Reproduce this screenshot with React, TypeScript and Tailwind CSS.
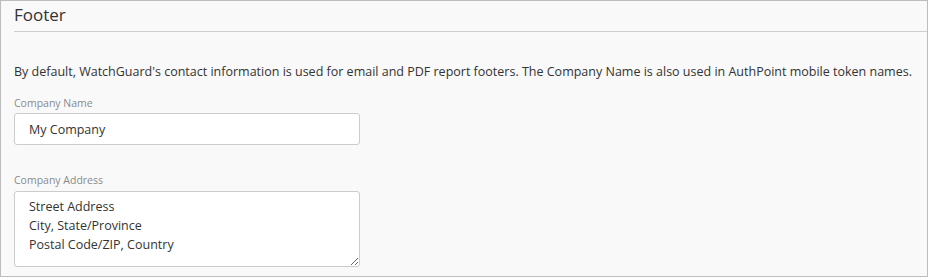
export default function App() {
  return (
    <div
      className="w-[928px] h-[277px] border border-[#bdbdbd] bg-[#f9f9f9] text-[#333] overflow-hidden"
      style={{ fontFamily: '"Open Sans", "Noto Sans", sans-serif' }}
    >
      {/* Section header */}
      <div className="ml-[13px] border-b border-[#cfcfcf] h-[31px] flex items-end">
        <h2 className="text-[17px] leading-[24px] pb-[4px] text-[#333]">Footer</h2>
      </div>

      <div className="pl-[13px] pr-3">
        <p className="mt-[31px] text-[12.5px] leading-[18px] whitespace-nowrap">
          By default, WatchGuard's contact information is used for email and PDF report footers. The Company Name is also used in AuthPoint mobile token names.
        </p>

        {/* Company name */}
        <label className="block mt-[15px] text-[10.5px] leading-[14px] text-[#8a8a8a]">Company Name</label>
        <input
          type="text"
          defaultValue="My Company"
          className="mt-[3px] block w-[346px] h-[32px] bg-white border border-[#cccccc] rounded-[3px] px-[14px] text-[12.5px] text-[#333] outline-none"
        />

        {/* Company address */}
        <label className="block mt-[28px] text-[10.5px] leading-[14px] text-[#8a8a8a]">Company Address</label>
        <textarea
          defaultValue={'Street Address\nCity, State/Province\nPostal Code/ZIP, Country'}
          className="mt-[4px] block w-[346px] h-[76px] bg-white border border-[#cccccc] rounded-[3px] px-[14px] py-[5px] text-[12.5px] leading-[19px] text-[#333] outline-none resize"
        />
      </div>
    </div>
  );
}
